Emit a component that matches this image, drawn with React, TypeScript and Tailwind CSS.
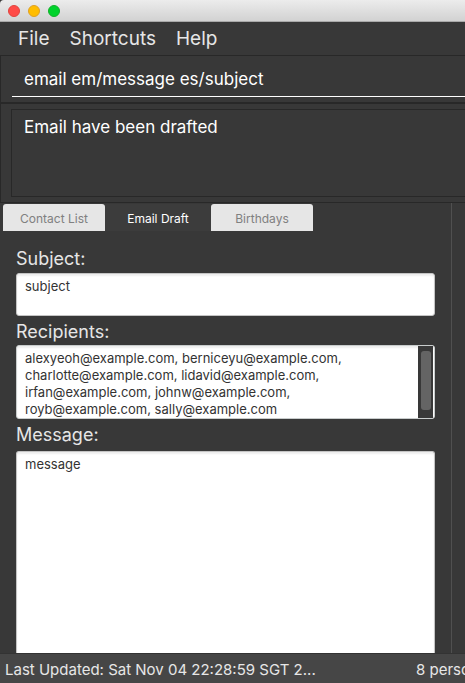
import React from "react";

const tabs = [
  { label: "Contact List", active: false },
  { label: "Email Draft", active: true },
  { label: "Birthdays", active: false },
];

const recipients = [
  "alexyeoh@example.com, berniceyu@example.com,",
  "charlotte@example.com, lidavid@example.com,",
  "irfan@example.com, johnw@example.com,",
  "royb@example.com, sally@example.com",
].join("\n");

function TitleBar() {
  return (
    <header className="flex h-[22px] shrink-0 items-center gap-2 rounded-tl border-b border-[#a9a9a9] bg-linear-to-b from-[#ececec] to-[#d2d2d2] px-2">
      <button aria-label="Close" className="size-3 rounded-full border border-[#e0443e] bg-[#ff4b47]" />
      <button aria-label="Minimize" className="size-3 rounded-full border border-[#dfa023] bg-[#ffbd00]" />
      <button aria-label="Zoom" className="size-3 rounded-full border border-[#12b02a] bg-[#00d32c]" />
    </header>
  );
}

function MenuBar() {
  return (
    <nav className="flex h-[33px] shrink-0 items-center gap-5 px-[18px] text-[19px] leading-6 text-[#e6e6e6]">
      <button>File</button>
      <button>Shortcuts</button>
      <button>Help</button>
    </nav>
  );
}

export default function App() {
  return (
    <div className="flex h-screen flex-col overflow-hidden bg-[#383838] font-['Inter',sans-serif]">
      <TitleBar />
      <MenuBar />

      <section className="shrink-0 border-y border-l border-[#282828] pb-[5px] pl-[11px]">
        <input
          aria-label="Command"
          defaultValue="email em/message es/subject"
          className="block h-[41px] w-full border-b border-white bg-transparent px-3 pt-[6px] text-[17px] text-white outline-none"
        />
      </section>

      <section className="shrink-0 border-y border-l border-[#282828] pt-[5px] pb-[5px] pl-[10px]">
        <textarea
          aria-label="Result"
          readOnly
          defaultValue="Email have been drafted"
          className="block h-[88px] w-full resize-none border border-r-0 border-[#282828] bg-transparent px-3 py-[5px] text-[17px] leading-6 text-white outline-none"
        />
      </section>

      <div className="flex min-h-0 grow">
        <main className="flex min-w-0 grow flex-col border-r border-[#505050] pt-px">
          <div role="tablist" className="flex h-[27px] shrink-0 pl-[3px] text-[12px]">
            {tabs.map((tab) => (
              <button
                key={tab.label}
                role="tab"
                aria-selected={tab.active}
                className={
                  tab.active
                    ? "w-[106px] bg-[#3c3c3c] pt-0.5 text-white"
                    : "w-[102px] rounded-t-[3px] bg-[#e6e6e6] pt-0.5 text-[#808080]"
                }
              >
                {tab.label}
              </button>
            ))}
          </div>

          <form className="flex min-h-0 grow flex-col px-4 pt-4 text-[13px] leading-[17px] text-[#333333]">
            <label htmlFor="subject" className="h-[26px] shrink-0 text-[18px] leading-6 text-[#e6e6e6]">
              Subject:
            </label>
            <textarea
              id="subject"
              defaultValue="subject"
              className="block h-[43px] w-full shrink-0 resize-none rounded-[3px] border border-[#c4c4c4] bg-white px-2 py-1 shadow-[inset_0_2px_2px_#eeeeee] outline-none"
            />
            <label htmlFor="recipients" className="h-[29px] shrink-0 pt-1 text-[18px] leading-6 text-[#e6e6e6]">
              Recipients:
            </label>
            <div className="flex h-[74px] shrink-0 rounded-[3px] border border-[#c8cccc] bg-white pr-px shadow-[inset_0_2px_2px_#eeeeee]">
              <textarea
                id="recipients"
                defaultValue={recipients}
                className="block min-w-0 grow resize-none overflow-hidden px-2 pt-1 outline-none"
              />
              <div className="flex w-[15px] bg-[#383838] pt-[5px] pr-0.5 pb-2 pl-[3px]">
                <div className="w-full rounded-[3px] bg-[#646464]" />
              </div>
            </div>
            <label htmlFor="message" className="h-8 shrink-0 pt-1 text-[18px] leading-6 text-[#e6e6e6]">
              Message:
            </label>
            <textarea
              id="message"
              defaultValue="message"
              className="block min-h-0 w-full grow resize-none rounded-t-[3px] border border-b-0 border-[#c4c4c4] bg-white px-2 py-1 shadow-[inset_0_2px_2px_#eeeeee] outline-none"
            />
          </form>
        </main>
        <aside className="w-[13px] shrink-0" />
      </div>

      <footer className="flex h-[30px] shrink-0 items-center justify-between overflow-hidden border-t border-[#333333] bg-[#464646] pt-1 pl-[5px] text-[15px] whitespace-nowrap text-[#e6e6e6]">
        <span>Last Updated: Sat Nov 04 22:28:59 SGT 2...</span>
        <span className="w-[49px]">8 perso</span>
      </footer>
    </div>
  );
}
